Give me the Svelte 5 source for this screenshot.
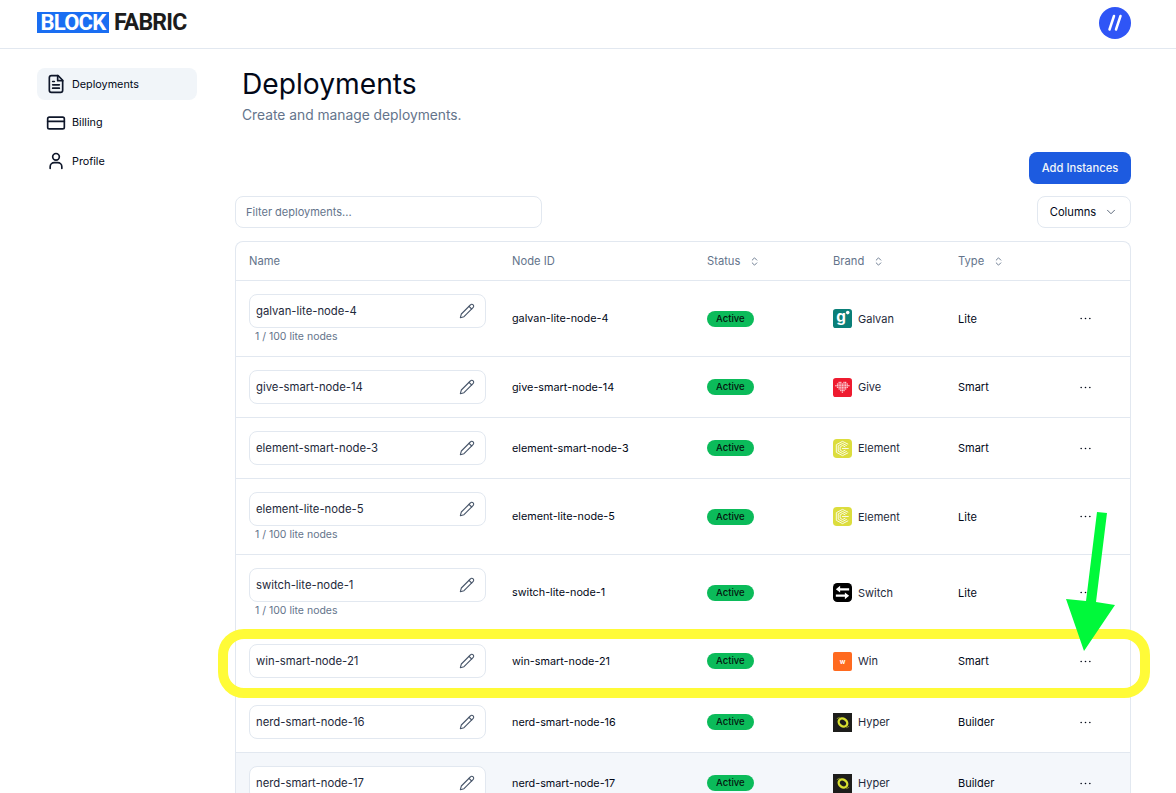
<script>
	const rows = [
		{ name: 'galvan-lite-node-4', brand: 'Galvan', type: 'Lite', nodes: true },
		{ name: 'give-smart-node-14', brand: 'Give', type: 'Smart' },
		{ name: 'element-smart-node-3', brand: 'Element', type: 'Smart' },
		{ name: 'element-lite-node-5', brand: 'Element', type: 'Lite', nodes: true },
		{ name: 'switch-lite-node-1', brand: 'Switch', type: 'Lite', nodes: true },
		{ name: 'win-smart-node-21', brand: 'Win', type: 'Smart' },
		{ name: 'nerd-smart-node-16', brand: 'Hyper', type: 'Builder' },
		{ name: 'nerd-smart-node-17', brand: 'Hyper', type: 'Builder', hover: true }
	]

	const heart = ['..XX.XX..', '.XXXXXXX.', 'XXXXXXXXX', '.XXXXXXX.', '..XXXXX..', '...XXX...', '....X....']
	const heartCells = []
	heart.forEach((line, y) => {
		line.split('').forEach((c, x) => {
			if (c === 'X') heartCells.push({ x: 2.4 + x * 1.7, y: 4 + y * 1.7 })
		})
	})
</script>

<div class="page">
	<header class="topbar">
		<div class="logo">
			<span class="logo-block">BLOCK</span>
			<span class="logo-fabric">FABRIC</span>
		</div>
		<svg class="avatar" viewBox="0 0 32 32" width="32" height="32">
			<circle cx="16" cy="16" r="16" fill="#2f55f6" />
			<path d="M15 9 10.500 22.500M21.500 9 17 22.500" stroke="#fff" stroke-width="2.500" stroke-linecap="round" fill="none" />
		</svg>
	</header>

	<div class="layout">
		<nav class="sidebar">
			<a class="nav-item active" href="#top">
				<svg viewBox="0 0 24 24" width="20" height="20" class="nav-icon">
					<path d="M14.5 2H6.5A2.5 2.5 0 0 0 4 4.5v15A2.5 2.5 0 0 0 6.5 22h11a2.500 2.500 0 0 0 2.500-2.500V7.500z" />
					<path d="M14 2v6h6M8 13h8M8 17h8M8 9h2" />
				</svg>
				Deployments
			</a>
			<a class="nav-item" href="#top">
				<svg viewBox="0 0 24 24" width="20" height="20" class="nav-icon">
					<rect x="2" y="5" width="20" height="14" rx="2" />
					<path d="M2 10h20" />
				</svg>
				Billing
			</a>
			<a class="nav-item" href="#top">
				<svg viewBox="0 0 24 24" width="20" height="20" class="nav-icon">
					<circle cx="12" cy="7" r="4" />
					<path d="M5 21v-2a5 5 0 0 1 5-5h4a5 5 0 0 1 5 5v2" />
				</svg>
				Profile
			</a>
		</nav>

		<main class="main">
			<h1>Deployments</h1>
			<p class="subtitle">Create and manage deployments.</p>

			<div class="actions">
				<button class="add-btn">Add Instances</button>
			</div>

			<div class="filters">
				<input class="filter" placeholder="Filter deployments..." />
				<button class="columns-btn">
					Columns
					<svg viewBox="0 0 24 24" width="14" height="14" class="chev"><path d="m6 9 6 6 6-6" /></svg>
				</button>
			</div>

			<div class="table-wrap">
				<table>
					<colgroup>
						<col style="width:263px" />
						<col style="width:195px" />
						<col style="width:126px" />
						<col style="width:125px" />
						<col style="width:120px" />
						<col />
					</colgroup>
					<thead>
						<tr>
							<th>Name</th>
							<th>Node ID</th>
							{#each ['Status', 'Brand', 'Type'] as col}
								<th>
									<span class="sortable">
										{col}
										<svg viewBox="0 0 24 24" width="11" height="11" class="sort"><path d="m7 15 5 5 5-5M7 9l5-5 5 5" /></svg>
									</span>
								</th>
							{/each}
							<th></th>
						</tr>
					</thead>
					<tbody>
						{#each rows as row}
							<tr class:hover={row.hover}>
								<td class="name-cell">
									<div class="name-box">
										<span>{row.name}</span>
										<svg viewBox="0 0 24 24" width="16" height="16" class="pencil">
											<path d="M17 3a2.850 2.830 0 1 1 4 4L7.500 20.500 2 22l1.500-5.500Z" />
											<path d="m15 5 4 4" />
										</svg>
									</div>
									{#if row.nodes}
										<div class="nodes">1 / 100 lite nodes</div>
									{/if}
								</td>
								<td class="node-id">{row.name}</td>
								<td><span class="badge">Active</span></td>
								<td>
									<div class="brand">
										{#if row.brand === 'Galvan'}
											<svg viewBox="0 0 20 20" width="19" height="19">
												<rect width="20" height="20" rx="3" fill="#0a7f78" />
												<text x="8.500" y="13.500" text-anchor="middle" class="logo-g">g</text>
												<circle cx="15.500" cy="3.800" r="1.900" fill="#fff" />
											</svg>
										{:else if row.brand === 'Give'}
											<svg viewBox="0 0 20 20" width="19" height="19">
												<rect width="20" height="20" rx="3" fill="#ee1b2f" />
												{#each heartCells as c}
													<rect x={c.x} y={c.y} width="1.400" height="1.400" fill="#fbc9cf" />
												{/each}
											</svg>
										{:else if row.brand === 'Element'}
											<svg viewBox="0 0 20 20" width="19" height="19" fill="none" stroke="#fff" stroke-width="0.900">
												<rect width="20" height="20" rx="4" fill="#dcdd3d" stroke="none" />
												<path d="M16 5.500 10 2.500 3.500 6v8l6.500 3.500 6-3" />
												<path d="M14.500 7 10 4.700 5.500 7.200v5.600l4.500 2.500 4.500-2.300" />
												<path d="M13 8.300 10 6.800 7.500 8.300v3.400L10 13.200l3-1.500M9.500 10h7" />
											</svg>
										{:else if row.brand === 'Switch'}
											<svg viewBox="0 0 20 20" width="19" height="19">
												<rect width="20" height="20" rx="4.500" fill="#000" />
												<path d="M3 6.500 7.500 3v2.500H17v2.400H7.500v2.100zM17 13.500 12.500 10v2.100H3v2.400h9.500V17z" fill="#fff" />
											</svg>
										{:else if row.brand === 'Win'}
											<svg viewBox="0 0 20 20" width="19" height="19">
												<rect width="20" height="20" rx="2" fill="#ff6a1f" />
												<text x="10" y="12.500" text-anchor="middle" class="logo-w">w</text>
											</svg>
										{:else}
											<svg viewBox="0 0 20 20" width="19" height="19" fill="none">
												<rect width="20" height="20" fill="#1d1d1b" />
												<ellipse cx="10.500" cy="10" rx="4.800" ry="3.900" transform="rotate(35 10.500 10)" stroke="#d8e030" stroke-width="2.500" />
												<path d="M4 6 7 4.500M17 14l-3 1.500" stroke="#8f9528" stroke-width="1" />
											</svg>
										{/if}
										<span>{row.brand}</span>
									</div>
								</td>
								<td>{row.type}</td>
								<td>
									<svg viewBox="0 0 24 24" width="13" height="13" class="dots">
										<circle cx="4" cy="12" r="1.500" />
										<circle cx="12" cy="12" r="1.500" />
										<circle cx="20" cy="12" r="1.500" />
									</svg>
								</td>
							</tr>
						{/each}
					</tbody>
				</table>
			</div>
		</main>
	</div>

	<!-- annotation drawn on top of the screenshot -->
	<div class="highlight"></div>
	<svg class="arrow" viewBox="0 0 60 145" width="60" height="145">
		<polygon points="32,2 42,3 31,92 50,95 19,141 1,89 21,91" fill="#00f93a" />
	</svg>
</div>

<style>
:global(body) {
	margin: 0;
	background: #fff;
	font-family: Inter, "Liberation Sans", sans-serif;
	color: #020817;
}

.page {
	position: relative;
	height: 793px;
	overflow: hidden;
}

.topbar {
	height: 48px;
	display: flex;
	align-items: center;
	justify-content: space-between;
	padding: 0 45px 0 37px;
	border-bottom: 1px solid #e2e8f0;
}

.logo {
	display: flex;
	align-items: center;
	gap: 5px;
	font-family: Roboto, "Liberation Sans", sans-serif;
	font-weight: 700;
	line-height: 21px;
	margin-top: -3px;
}

.logo-block {
	width: 72px;
	height: 21px;
	background: #1a6ef2;
	color: #fff;
	text-align: center;
	letter-spacing: -0.800px;
	font-size: 22px;
}

.logo-fabric {
	color: #1c1c1c;
	letter-spacing: -0.800px;
	font-size: 23px;
}

.avatar {
	display: block;
	margin-top: -2px;
}

.layout {
	display: flex;
}

.sidebar {
	width: 198px;
	box-sizing: border-box;
	padding: 19px 0 0 37px;
	display: flex;
	flex-direction: column;
	gap: 6.500px;
	flex-shrink: 0;
}

.nav-item {
	height: 32px;
	width: 160px;
	box-sizing: border-box;
	padding-left: 9px;
	display: flex;
	align-items: center;
	gap: 6px;
	font-size: 10.800px;
	color: #020817;
	text-decoration: none;
	border-radius: 8px;
}

.nav-item.active {
	background: #f1f5f9;
}

.nav-icon {
	fill: none;
	stroke: #0f172a;
	stroke-width: 2;
	stroke-linecap: round;
	stroke-linejoin: round;
}

.main {
	flex: 1;
	margin-left: 37px;
	margin-right: 45px;
	min-width: 0;
}

h1 {
	margin: 17px 0 0 7px;
	font-size: 28.200px;
	line-height: 36px;
	font-weight: 400;
}

.subtitle {
	margin: 3px 0 0 7px;
	font-size: 13.800px;
	line-height: 20px;
	color: #64748b;
}

.actions {
	display: flex;
	justify-content: flex-end;
	margin-top: 27px;
}

.add-btn {
	width: 102px;
	height: 32px;
	border: none;
	border-radius: 8px;
	background: #1d5be0;
	color: #f1f5f9;
	font: 500 11.200px Inter, sans-serif;
}

.filters {
	display: flex;
	justify-content: space-between;
	margin-top: 12px;
}

.filter {
	width: 307px;
	height: 32px;
	box-sizing: border-box;
	padding: 0 10px;
	border: 1px solid #e2e8f0;
	border-radius: 8px;
	font: 11px Inter, sans-serif;
	outline: none;
}

.filter::placeholder {
	color: #64748b;
}

.columns-btn {
	width: 94px;
	height: 32px;
	box-sizing: border-box;
	display: flex;
	align-items: center;
	justify-content: center;
	gap: 8px;
	background: #fff;
	border: 1px solid #e2e8f0;
	border-radius: 8px;
	font: 400 11.200px Inter, sans-serif;
	color: #020817;
}

.chev, .sort, .pencil {
	fill: none;
	stroke-linecap: round;
	stroke-linejoin: round;
}

.chev {
	stroke: #475569;
	stroke-width: 1.500;
}

.table-wrap {
	margin-top: 13px;
	border: 1px solid #e2e8f0;
	border-bottom: none;
	border-radius: 8px 8px 0 0;
}

table {
	width: 100%;
	table-layout: fixed;
	border-collapse: collapse;
	font-size: 11px;
}

th {
	height: 38px;
	padding: 0 0 0 13px;
	text-align: left;
	font-weight: 400;
	font-size: 11.200px;
	color: #64748b;
	border-bottom: 1px solid #e2e8f0;
}

.sortable {
	display: inline-flex;
	align-items: center;
	gap: 9px;
}

.sort {
	stroke: #64748b;
	stroke-width: 2;
}

td {
	padding: 13px 0 12.800px 13px;
	border-bottom: 1px solid #e2e8f0;
	vertical-align: middle;
}

tr.hover td {
	background: #f4f7fb;
}

.name-box {
	width: 237px;
	height: 34px;
	box-sizing: border-box;
	display: flex;
	align-items: center;
	justify-content: space-between;
	padding: 0 10px 0 6px;
	background: #fff;
	border: 1px solid #e2e8f0;
	border-radius: 8px;
	font-size: 11.300px;
	color: #1e293b;
}

.pencil {
	stroke: #475569;
	stroke-width: 1.600;
}

.node-id {
	font-size: 10.800px;
	color: #020817;
}

.nodes {
	height: 15px;
	line-height: 15px;
	padding-top: 1px;
	padding-left: 6px;
	margin-bottom: -0.500px;
	font-size: 10.500px;
	color: #64748b;
}

.badge {
	display: inline-block;
	height: 16px;
	line-height: 16px;
	padding: 0 9px;
	border-radius: 8px;
	background: #0bbb5a;
	font-size: 9.500px;
	font-weight: 500;
	color: #04140e;
}

.brand {
	display: flex;
	align-items: center;
	gap: 6px;
	color: #1e293b;
}

.brand svg {
	display: block;
	flex-shrink: 0;
}

.logo-g {
	font: 700 16px Inter, sans-serif;
	fill: #fff;
}

.logo-w {
	font: 700 7px Inter, sans-serif;
	fill: #fff;
}

.dots {
	display: block;
	margin-left: 1px;
	fill: #020817;
}

.highlight {
	position: absolute;
	left: 218px;
	top: 629px;
	width: 932px;
	height: 69px;
	box-sizing: border-box;
	border: 10px solid #fffb38;
	border-radius: 26px;
}

.arrow {
	position: absolute;
	left: 1065px;
	top: 510px;
}
</style>
